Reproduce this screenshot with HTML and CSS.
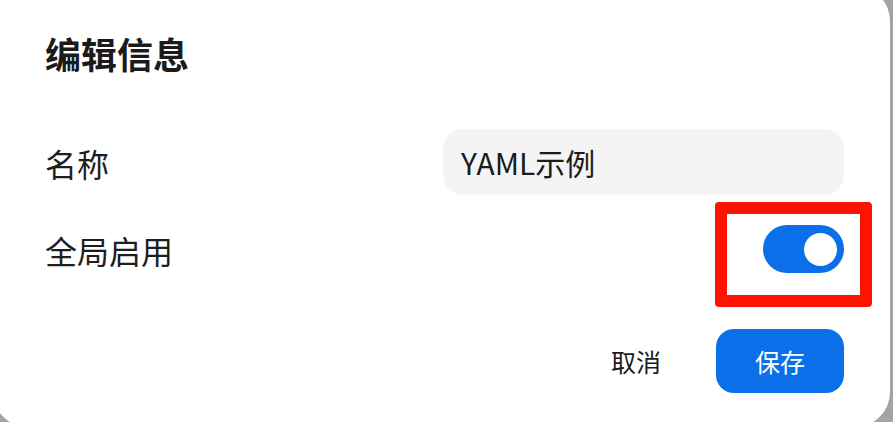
FILE: index.html
```html
<!DOCTYPE html>
<html lang="zh-CN">
<head>
<meta charset="utf-8">
<title>编辑信息</title>
<link rel="stylesheet" href="styles.css">
</head>
<body>
<div class="backdrop">
  <div class="dialog">
    <h1 class="title">编辑信息</h1>
    <div class="row row-name">
      <span class="label">名称</span>
      <div class="input">YAML示例</div>
    </div>
    <div class="row row-toggle">
      <span class="label">全局启用</span>
      <div class="toggle-wrap">
        <div class="toggle"><span class="knob"></span></div>
        <div class="highlight"></div>
      </div>
    </div>
    <div class="footer">
      <button class="btn btn-cancel">取消</button>
      <button class="btn btn-save">保存</button>
    </div>
  </div>
</div>
</body>
</html>
```
FILE: styles.css
```css
html, body {
  margin: 0;
  padding: 0;
  width: 893px;
  height: 422px;
  overflow: hidden;
  background: #a4a4a4;
  font-family: "Noto Sans CJK SC", "Noto Sans", sans-serif;
}
.backdrop {
  width: 893px;
  height: 422px;
  overflow: hidden;
}
.dialog {
  box-sizing: border-box;
  margin: -14px 0 0 -7px;
  width: 897px;
  height: 441px;
  background: #ffffff;
  border-radius: 35px;
  padding: 43px 46px 0 52px;
  display: flex;
  flex-direction: column;
}
.title {
  margin: 0;
  font-size: 36px;
  line-height: 48px;
  font-weight: 700;
  color: #1b1b1b;
}
.row {
  display: flex;
  align-items: center;
  justify-content: space-between;
}
.row-name {
  margin-top: 52px;
  height: 66px;
}
.row-toggle {
  margin-top: 30px;
  height: 48px;
}
.label {
  font-size: 32px;
  line-height: 48px;
  color: #1e1e1e;
  margin-top: 2px;
}
.input {
  box-sizing: border-box;
  width: 401px;
  height: 66px;
  background: #f4f4f4;
  border-radius: 20px;
  padding: 0 18px;
  font-size: 30px;
  line-height: 66px;
  color: #1b1b1b;
}
.toggle-wrap {
  position: relative;
  width: 81px;
  height: 48px;
}
.toggle {
  position: relative;
  width: 81px;
  height: 48px;
  border-radius: 24px;
  background: #0a6fe8;
}
.knob {
  position: absolute;
  right: 7px;
  top: 7.5px;
  width: 33px;
  height: 33px;
  border-radius: 50%;
  background: #ffffff;
}
.highlight {
  position: absolute;
  left: -48px;
  top: -23px;
  width: 157px;
  height: 105px;
  box-sizing: border-box;
  border: 12px solid #fe1200;
  border-radius: 4px;
}
.footer {
  margin-top: 56px;
  display: flex;
  justify-content: flex-end;
  gap: 16px;
}
.btn {
  width: 128px;
  height: 64px;
  border: none;
  border-radius: 18px;
  font-family: "Noto Sans CJK SC", "Noto Sans", sans-serif;
  font-size: 25px;
  padding: 0;
  cursor: pointer;
}
.btn-cancel {
  background: transparent;
  color: #1b1b1b;
}
.btn-save {
  background: #0a6fe8;
  color: #ffffff;
}
```
